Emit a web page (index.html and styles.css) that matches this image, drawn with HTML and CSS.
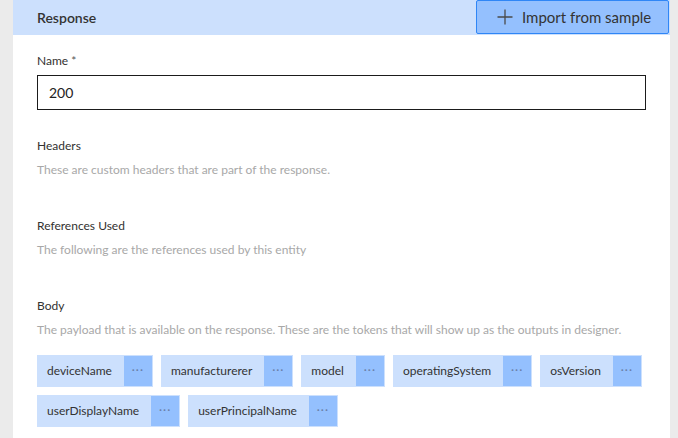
FILE: index.html
```html
<!DOCTYPE html>
<html lang="en">
<head>
    <meta charset="UTF-8">
    <title>Response</title>
    <link rel="stylesheet" href="styles.css">
</head>
<body>
    <div class="panel">
        <div class="panel-header">
            <span class="panel-title">Response</span>
            <button class="import-btn">
                <svg width="16" height="16" viewBox="0 0 16 16"><path d="M8 0.5V15.5M0.5 8H15.5" stroke="#4a4a4a" stroke-width="1.3" fill="none"/></svg>
                Import from sample
            </button>
        </div>

        <div class="content">
            <div class="field">
                <label class="field-label">Name <span class="req">*</span></label>
                <input class="text-input" type="text" value="200">
            </div>

            <div class="section">
                <div class="field-label">Headers</div>
                <div class="field-desc">These are custom headers that are part of the response.</div>
            </div>

            <div class="section">
                <div class="field-label">References Used</div>
                <div class="field-desc">The following are the references used by this entity</div>
            </div>

            <div class="section">
                <div class="field-label">Body</div>
                <div class="field-desc">The payload that is available on the response. These are the tokens that will show up as the outputs in designer.</div>
                <div class="tokens">
                    <div class="token"><span class="token-name">deviceName</span><span class="token-more">···</span></div>
                    <div class="token"><span class="token-name">manufacturerer</span><span class="token-more">···</span></div>
                    <div class="token"><span class="token-name">model</span><span class="token-more">···</span></div>
                    <div class="token"><span class="token-name">operatingSystem</span><span class="token-more">···</span></div>
                    <div class="token"><span class="token-name">osVersion</span><span class="token-more">···</span></div>
                    <div class="token"><span class="token-name">userDisplayName</span><span class="token-more">···</span></div>
                    <div class="token"><span class="token-name">userPrincipalName</span><span class="token-more">···</span></div>
                </div>
            </div>
        </div>
    </div>
</body>
</html>
```

FILE: styles.css
```css
* {
    margin: 0;
    padding: 0;
    box-sizing: border-box;
}

body {
    font-family: 'Segoe UI', Lato, sans-serif;
    background: #ebebeb;
    color: #323130;
    overflow: hidden;
}

.panel {
    margin: 0 8px 0 13px;
    background: white;
    height: 100vh;
}

.panel-header {
    display: flex;
    justify-content: space-between;
    height: 35px;
    background: #cce0fd;
}

.panel-title {
    padding-left: 24px;
    line-height: 35px;
    font-size: 14px;
    font-weight: 600;
    color: #333;
}

.import-btn {
    display: flex;
    align-items: center;
    gap: 9px;
    width: 193px;
    height: 34px;
    margin-right: 1px;
    padding-left: 20px;
    background: #94c0fe;
    border: 1px solid #2f86f6;
    border-radius: 2px;
    font-family: inherit;
    font-size: 15px;
    color: #333;
}

.content {
    padding: 16px 24px 0;
}

.field-label {
    display: block;
    font-size: 12px;
    line-height: 20px;
    color: #323130;
}

.req {
    color: #555;
}

.text-input {
    display: block;
    width: 100%;
    height: 35px;
    margin-top: 4px;
    padding: 0 11px;
    border: 1px solid #1b1b1b;
    font-family: inherit;
    font-size: 14px;
    color: #222;
    outline: none;
}

.section {
    margin-top: 26px;
}

.section + .section {
    margin-top: 36px;
}

.field-desc {
    margin-top: 4px;
    font-size: 12px;
    line-height: 20px;
    color: #a8a8a8;
}

.tokens {
    display: flex;
    flex-wrap: wrap;
    gap: 8px;
    margin-top: 15px;
}

.token {
    display: flex;
    height: 32px;
    padding: 1px;
    background: #cce0fd;
}

.token-name {
    padding: 0 12px 0 9px;
    line-height: 30px;
    font-size: 12px;
    color: #333;
}

.token-more {
    width: 28px;
    line-height: 28px;
    text-align: center;
    background: #94c0fe;
    color: #6a7fa8;
    font-size: 12px;
    letter-spacing: 1px;
}
```
